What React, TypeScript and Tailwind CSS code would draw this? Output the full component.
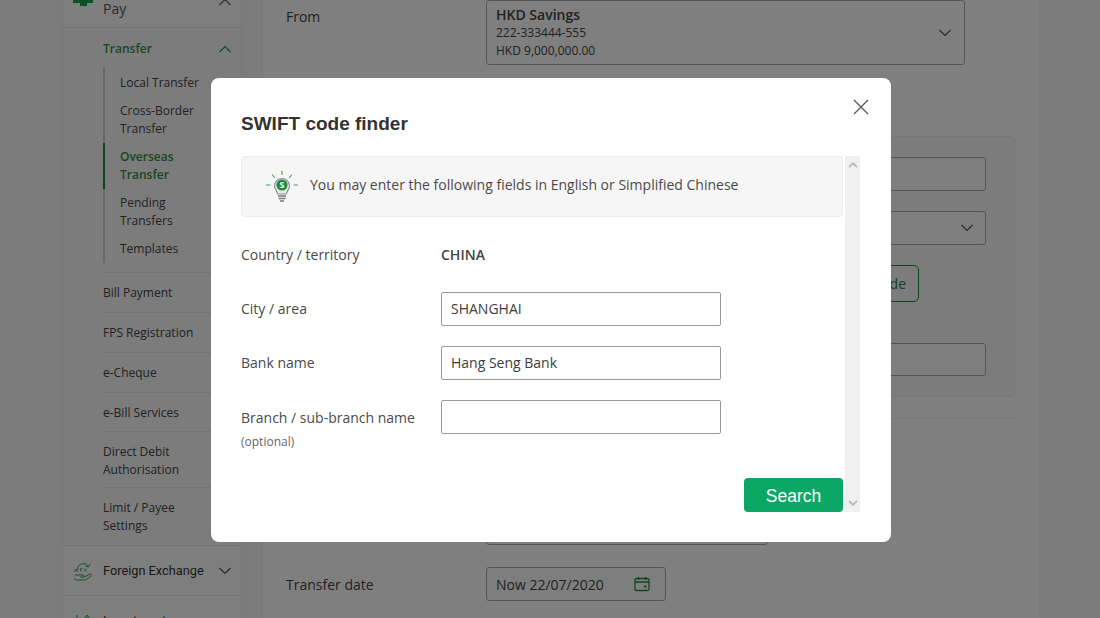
import React from "react";

const Chevron = ({ up = false, className = "", sw = 1.2 }: { up?: boolean; className?: string; sw?: number }) => (
  <svg width="14" height="8" viewBox="0 0 14 8" fill="none" stroke="currentColor" strokeWidth={sw} className={className}>
    {up ? <path d="M1.5 7 L7 1.5 L12.5 7" /> : <path d="M1.5 1 L7 6.5 L12.5 1" />}
  </svg>
);

const SubItem = ({ children, active = false }: { children: React.ReactNode; active?: boolean }) => (
  <div className={`w-[105px] -ml-[2px] border-l-2 py-[5px] pl-[15px] text-[12px] leading-[18px] ${active ? "border-[#1c8a3a] font-semibold text-[#2f8f46]" : "border-transparent text-[#444]"}`}>
    {children}
  </div>
);

const MenuRow = ({ children, h }: { children: React.ReactNode; h: string }) => (
  <div className={`flex items-center border-b border-[#e6e6e6] text-[12px] leading-[18px] text-[#444] ${h}`}>{children}</div>
);

const Sidebar = () => (
  <aside className="w-[180px] shrink-0 border-x border-[#ececec] bg-[#f9f9f9]">
    <div className="relative h-[68px] border-b border-[#e6e6e6] bg-[#fdfdfd] pl-[40px] pt-[39px] text-[14px] leading-[20px] text-[#555]">
      <svg width="22" height="18" viewBox="0 0 22 18" className="absolute left-[9px] top-[29px]">
        <path d="M1 0h20v14h-6v3H8v-3H1z" fill="#16a34a" />
        <path d="M7 7h3v3H7zM13 6h3v2h-3z" fill="#fff" />
      </svg>
      Pay
      <Chevron up className="absolute right-[9px] top-[38px] text-[#666]" />
    </div>
    <div className="pl-[40px]">
      <div className="flex h-[40px] items-center justify-between pr-[9px] text-[12px] font-semibold text-[#2f8f46]">
        <span className="mt-[1px]">Transfer</span>
        <Chevron up className="mt-[1px] text-[#2f8f46]" />
      </div>
      <div className="mb-[9px] flex flex-col border-l-2 border-[#cfcfcf] pt-[1px]">
        <SubItem>Local Transfer</SubItem>
        <SubItem>Cross-Border Transfer</SubItem>
        <SubItem active>Overseas Transfer</SubItem>
        <SubItem>Pending Transfers</SubItem>
        <SubItem>Templates</SubItem>
      </div>
      <div className="border-t border-[#e6e6e6]">
        <MenuRow h="h-[40px]">Bill Payment</MenuRow>
        <MenuRow h="h-[40px]">FPS Registration</MenuRow>
        <MenuRow h="h-[40px]">e-Cheque</MenuRow>
        <MenuRow h="h-[39px] pt-[1px]">e-Bill Services</MenuRow>
        <MenuRow h="h-[56px] pt-[2px]">
          <span>Direct Debit<br />Authorisation</span>
        </MenuRow>
        <div className="flex h-[57px] items-center text-[12px] leading-[18px] text-[#444]">
          <span>Limit / Payee<br />Settings</span>
        </div>
      </div>
    </div>
    <div className="relative flex h-[51px] items-center justify-between border-y border-[#e6e6e6] bg-[#fdfdfd] pl-[40px] pr-[9px] font-['Roboto',sans-serif] text-[12.75px] text-[#333]">
      <svg width="22" height="22" viewBox="0 0 22 22" fill="none" stroke="#35a35a" strokeWidth="1" className="absolute left-[9px] top-[15px]">
        <path d="M6 9a5.5 5.5 0 0 1 10-4M18 3l-1.5 3-3-1M2.5 11l1.5-3 1.5 3" />
        <path d="M8.5 7.5v3M8.5 7.5h2M8.5 9h1.5M12 7.5l2.5 3M14.5 7.5l-2.5 3" strokeWidth=".7" />
        <path d="M3 14h8c1.5 0 1.5 2 0 2H8M12 16l6-3c1.5-.5 2 1.5.5 2.5L13 19H5c-2 0-3-1-2-2" />
      </svg>
      <span className="mt-[1px]">Foreign Exchange</span>
      <Chevron className="text-[#555]" />
    </div>
    <div className="relative h-[40px] bg-[#fdfdfd] pl-[40px] pt-[15px] font-['Roboto',sans-serif] text-[12.75px] text-[#333]">
      <svg width="18" height="16" viewBox="0 0 18 16" fill="none" stroke="#35a35a" className="absolute left-[11px] top-[18px]">
        <path d="M3 1v14M10 5l3-4 3 4M13 1v14" />
      </svg>
      Investment
    </div>
  </aside>
);

const Field = ({ w, h, mt = "", children }: { w: string; h: string; mt?: string; children?: React.ReactNode }) => (
  <div className={`flex items-center justify-between rounded-[3px] border border-[#a9a9a9] bg-[#fdfdfd] ${w} ${h} ${mt}`}>{children}</div>
);

const Content = () => (
  <main className="ml-[20px] w-[778px] shrink-0 border-x border-[#ececec] bg-white font-['Open_Sans',sans-serif] text-[#444]">
    <div className="flex pl-[23px] pt-[40px]">
      <div className="w-[200px] pt-[6px] text-[14px] leading-[22px]">From</div>
      <div className="flex h-[65px] w-[479px] items-center justify-between rounded-[3px] border border-[#a9a9a9] pl-[9px] pr-[12px]">
        <div className="text-[#444]">
          <div className="text-[14px] font-semibold leading-[20px]">HKD Savings</div>
          <div className="-mt-[1px] text-[12px] leading-[18px]">222-333444-555</div>
          <div className="text-[12px] leading-[18px]">HKD 9,000,000.00</div>
        </div>
        <Chevron className="text-[#555]" />
      </div>
    </div>
    <div className="ml-[223px] mt-[71px] flex h-[261px] w-[529px] flex-col items-start rounded-[4px] border border-[#ececec] bg-[#f8f8f8] pr-[28px] pt-[20px]">
      <Field w="w-full" h="h-[34px]" />
      <Field w="w-full" h="h-[34px]" mt="mt-[20px]">
        <span />
        <Chevron className="mr-[11px] text-[#555]" />
      </Field>
      <div className="mt-[20px] flex h-[37px] w-full justify-end pr-[67px]">
        <div className="flex w-[60px] items-center justify-end rounded-[5px] border border-[#1d8a40] pr-[12px] text-[14px] text-[#1d8a40]">de</div>
      </div>
      <Field w="w-full" h="h-[33px]" mt="mt-[41px]" />
    </div>
    <div className="ml-[23px] mt-[21px] h-px w-[729px] bg-[#ececec]" />
    <div className="ml-[223px] mt-[92px] h-[34px] w-[282px] rounded-[3px] border border-[#a9a9a9]" />
    <div className="mt-[22px] flex items-center pl-[23px]">
      <div className="w-[200px] text-[14px]">Transfer date</div>
      <Field w="w-[180px]" h="h-[34px]">
        <span className="pl-[9px] text-[14px]">Now 22/07/2020</span>
        <svg width="16" height="16" viewBox="0 0 16 16" fill="none" stroke="#1d8a40" strokeWidth="1.3" className="mr-[15px]">
          <rect x="1" y="2.5" width="14" height="12" rx="1.5" />
          <path d="M1 6h14M4.5 1v3M11.5 1v3" />
          <rect x="10" y="9.5" width="2.5" height="2" fill="#1d8a40" stroke="none" />
        </svg>
      </Field>
    </div>
  </main>
);

const Bulb = () => (
  <svg width="34" height="34" viewBox="0 0 34 34" fill="none">
    <g stroke="#3f9d57" strokeWidth="1.1" strokeLinecap="round">
      <path d="M17 1v3.5M7.5 5l2 2.5M26.5 5l-2 2.5M1.5 15h3.5M29 15h3.5" />
    </g>
    <path d="M9.5 16a7.5 7.5 0 1 1 15 0c0 3.2-2.6 4.7-3 8h-9c-.4-3.3-3-4.8-3-8z" fill="#e8e8e8" stroke="#8d8d8d" strokeWidth="1.1" />
    <circle cx="17" cy="15" r="5.6" fill="#1f8a3d" />
    <text x="17" y="18.3" textAnchor="middle" fontSize="9" fontWeight="700" fill="#fff" fontFamily="Open Sans, sans-serif">S</text>
    <path d="M13 26h8M13.5 28.5h7M15 31h4" stroke="#777" strokeWidth="1.4" />
  </svg>
);

const Row = ({ label, value, mt, lift = false }: { label: string; value: string; mt: string; lift?: boolean }) => (
  <div className={`flex items-center ${mt}`}>
    <div className={`w-[200px] text-[14px] text-[#4a4a4a] ${lift ? "pb-[2px]" : ""}`}>{label}</div>
    <div className="flex h-[34px] w-[280px] items-center rounded-[2px] border border-[#9a9a9a] pb-[2px] pl-[9px] text-[14px] text-[#3c3c3c]">{value}</div>
  </div>
);

const Modal = () => (
  <div className="fixed inset-0 bg-black/50">
    <div className="relative ml-[211px] mt-[78px] h-[464px] w-[680px] rounded-[8px] bg-white px-[30px] pt-[33px] font-['Open_Sans',sans-serif]">
      <svg width="18" height="18" viewBox="0 0 18 18" stroke="#555" strokeWidth="1.3" className="absolute right-[21px] top-[20px]">
        <path d="M2 2l14 14M16 2L2 16" />
      </svg>
      <h2 className="h-[45px] font-['Liberation_Sans',sans-serif] text-[19px] font-bold leading-[25px] text-[#333]">SWIFT code finder</h2>
      <div className="flex h-[356px]">
        <div className="w-[602px]">
          <div className="flex h-[61px] items-center rounded-[4px] border border-[#ececec] bg-[#f6f6f6] pl-[23px]">
            <Bulb />
            <span className="ml-[11px] -mt-[5px] text-[14px] text-[#4a4a4a]">You may enter the following fields in English or Simplified Chinese</span>
          </div>
          <div className="mt-[27px] flex items-center">
            <div className="w-[200px] text-[14px] leading-[22px] text-[#4a4a4a]">Country / territory</div>
            <div className="text-[14px] font-semibold leading-[22px] text-[#444]">CHINA</div>
          </div>
          <Row label="City / area" value="SHANGHAI" mt="mt-[26px]" lift />
          <Row label="Bank name" value="Hang Seng Bank" mt="mt-[20px]" lift />
          <Row label="Branch / sub-branch name" value="" mt="mt-[20px]" />
          <div className="-mt-[1px] text-[12px] leading-[18px] text-[#666]">(optional)</div>
          <div className="mt-[27px] flex justify-end">
            <button className="h-[34px] w-[99px] rounded-[4px] bg-[#0aa864] pt-[2px] font-['Liberation_Sans',sans-serif] text-[17.5px] text-white">Search</button>
          </div>
        </div>
        <div className="ml-[2px] flex w-[15px] flex-col items-center justify-between bg-[#f0f0f0] py-[6px]">
          <Chevron up sw={2.4} className="h-[6px] w-[10px] text-[#b5b5b5]" />
          <Chevron sw={2.4} className="h-[6px] w-[10px] text-[#b5b5b5]" />
        </div>
      </div>
    </div>
  </div>
);

export default function App() {
  return (
    <div className="h-[618px] w-[1100px] overflow-hidden bg-[#f6f6f6] font-['Open_Sans',sans-serif]">
      <div className="-mt-[40px] ml-[62px] flex">
        <Sidebar />
        <Content />
      </div>
      <Modal />
    </div>
  );
}
